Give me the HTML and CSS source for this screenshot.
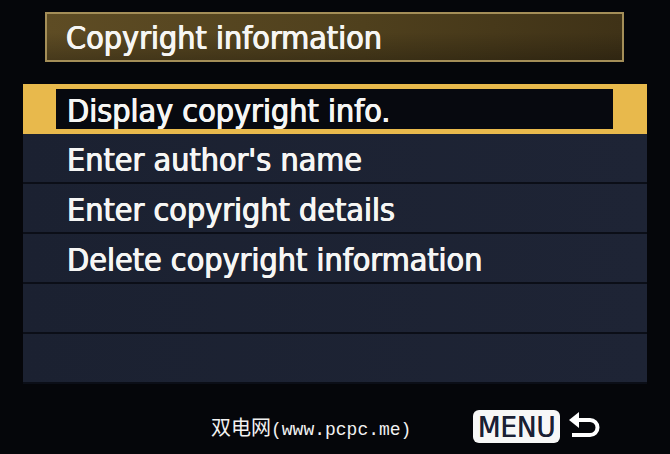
FILE: index.html
```html
<!DOCTYPE html>
<html lang="en">
  <head>
    <meta charset="UTF-8" />
    <meta name="viewport" content="width=device-width, initial-scale=1.0" />
    <title>Copyright information</title>
    <link rel="stylesheet" href="styles.css">
  </head>
  <body>
    <div class="screen">
      <div class="title-bar">Copyright information</div>

      <ul class="menu-list">
        <li class="menu-item selected"><span>Display copyright info.</span></li>
        <li class="menu-item"><span>Enter author's name</span></li>
        <li class="menu-item"><span>Enter copyright details</span></li>
        <li class="menu-item"><span>Delete copyright information</span></li>
        <li class="menu-item"><span></span></li>
        <li class="menu-item"><span></span></li>
      </ul>

      <div class="footer">
        <span class="watermark"><span class="cn">双电网</span>(www.pcpc.me)</span>
        <div class="back-hint">
          <span class="menu-badge">MENU</span>
          <svg class="return-icon" width="34" height="30" viewBox="0 0 34 30">
            <path d="M1 9 L11 1 L11 17 Z" fill="#fff" />
            <path d="M10 9 H22 A7.5 7.5 0 0 1 22 24 H4" fill="none" stroke="#fff" stroke-width="4" />
          </svg>
        </div>
      </div>
    </div>
  </body>
</html>
```

FILE: styles.css
```css
body {
  margin: 0;
  background-color: #05060a;
  font-family: "DejaVu Sans Condensed", "DejaVu Sans", sans-serif;
  color: #f6f6f4;
}
.screen {
  width: 670px;
  height: 454px;
  display: flex;
  flex-direction: column;
  overflow: hidden;
}
.title-bar {
  margin: 12px 46px 0 45px;
  height: 50px;
  box-sizing: border-box;
  border: 2px solid #a48e58;
  background: linear-gradient(180deg, rgba(0, 0, 0, 0) 40%, rgba(0, 0, 0, 0.25) 100%),
    linear-gradient(90deg, #5e4c24 0%, #4f401d 55%, #3f3217 100%);
  padding-left: 19px;
  font-size: 32px;
  line-height: 48px;
  text-shadow: 0.6px 0 0 #f6f6f4, -0.4px 0 0 #f6f6f4;
}
.menu-list {
  list-style: none;
  margin: 22px 23px 0 23px;
  padding: 0;
}
.menu-item {
  height: 48px;
  border-bottom: 2px solid #0b0e17;
  background: linear-gradient(90deg, #1b2131 0%, #1e2435 100%);
  padding-left: 44px;
  font-size: 32px;
  line-height: 52px;
  text-shadow: 0.6px 0 0 #f6f6f4, -0.4px 0 0 #f6f6f4;
}
.menu-item.selected {
  height: 50px;
  box-sizing: border-box;
  border-bottom: none;
  background: #e8b94c;
  padding: 5px 34px 5px 33px;
  line-height: 44px;
}
.menu-item.selected span {
  display: block;
  height: 40px;
  background-color: #07090f;
  padding-left: 11px;
}
.footer {
  flex: 1;
  display: flex;
  align-items: center;
  padding: 14px 0 0 211px;
}
.watermark {
  font-family: "Liberation Mono", "DejaVu Sans Mono", monospace;
  font-size: 18px;
  color: #f2f2f2;
  width: 262px;
}
.watermark .cn {
  font-family: "Noto Sans CJK SC", sans-serif;
  font-size: 20px;
}
.back-hint {
  display: flex;
  align-items: center;
  gap: 8px;
}
.menu-badge {
  background-color: #f7f7f7;
  color: #1a2034;
  border-radius: 6px;
  height: 33px;
  line-height: 35px;
  font-size: 29px;
  width: 87px;
  text-align: center;
  text-shadow: 0.5px 0 0 #1a2034;
}
```
